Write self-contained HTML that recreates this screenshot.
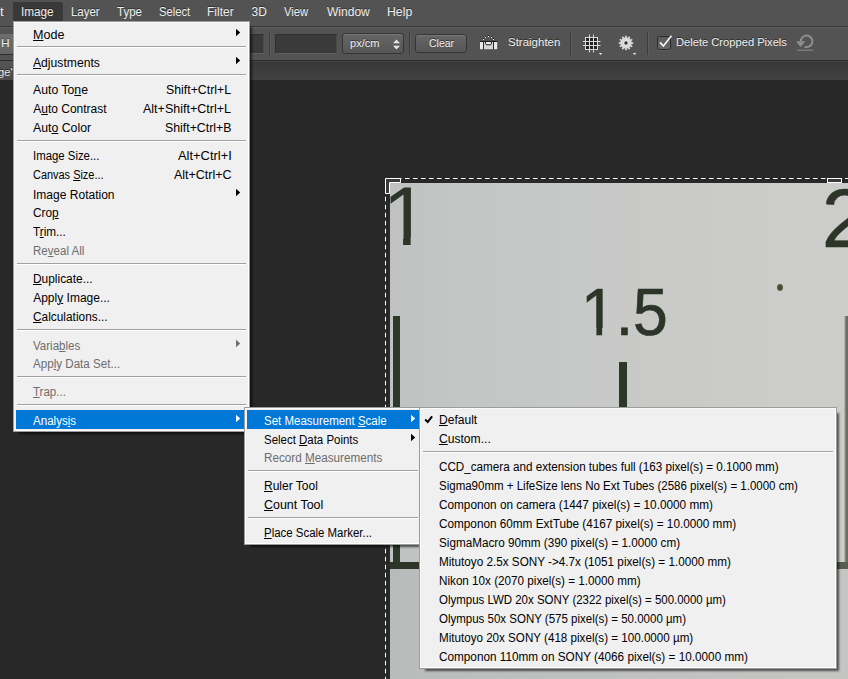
<!DOCTYPE html>
<html lang="en"><head><meta charset="utf-8"><title>Photoshop - Image &gt; Analysis &gt; Set Measurement Scale</title>
<style>
html,body{margin:0;padding:0}
body{width:848px;height:679px;overflow:hidden;position:relative;background:#282828;font:12px/19px "Liberation Sans",sans-serif;color:#000;cursor:default}
div,span{box-sizing:border-box}
.a{position:absolute}
.t{position:absolute;top:0;white-space:nowrap;transform-origin:0 50%;height:19px;line-height:19px}
u{text-decoration:underline;text-underline-offset:1px;text-decoration-thickness:1px}
/* ---------- app chrome ---------- */
#menubar{left:0;top:0;width:848px;height:26px;background:#535353;color:#f0f0f0}
#menubar .t{top:3px;line-height:19px;text-shadow:0 -1px 0 rgba(0,0,0,.45)}
#menubar .sel{left:13px;top:2px;width:50px;height:19px;background:#393939;border-radius:2px 2px 0 0}
#optbar{left:0;top:26px;width:848px;height:35px;background:#535353;border-top:1px solid #383838;border-bottom:1px solid #2b2b2b;box-shadow:inset 0 1px 0 #5f5f5f;color:#f0f0f0}
#optbar .t{top:6px;font-size:11px;text-shadow:0 -1px 0 rgba(0,0,0,.5)}
.field{top:7px;height:20px;background:#3a3a3a;border:1px solid #303030;border-bottom-color:#5e5e5e;border-right-color:#4a4a4a}
.vsep{top:5px;width:1px;height:23px;background:#3d3d3d;box-shadow:1px 0 0 #5c5c5c}
.btn{top:7px;height:20px;border:1px solid #353535;border-radius:3px;background:linear-gradient(#666,#565656);box-shadow:inset 0 1px 0 #777}
#tabbar{left:0;top:61px;width:848px;height:19px;background:linear-gradient(#383838,#424242);box-shadow:inset 0 1px 0 #444}
#tabbar .tab{left:0;top:0;width:13px;height:19px;background:linear-gradient(#555,#4c4c4c);color:#e8e8e8}
/* ---------- canvas ---------- */
#photo{left:390px;top:183px;width:458px;height:496px;overflow:hidden;
 background:
  linear-gradient(180deg,rgba(0,0,0,0) 386px,rgba(20,30,40,.045) 386px),
  linear-gradient(90deg,#bfc2c1 0,#c3c6c5 15%,#c6c8c7 35%,#c9cac8 60%,#ccccca 85%,#ccccca 100%);
 font-family:"Liberation Sans",sans-serif;color:#2c3528}
#photo .ink{background:#2d3829}
#photo .num{position:absolute;white-space:nowrap;line-height:1}
#photo .one{display:inline-block;clip-path:polygon(0 0,100% 0,100% .74em,.338em .74em,.338em 100%,.247em 100%,.247em .74em,0 .74em)}
/* ---------- popup menus ---------- */
.menu{background:#f0f0f0;border:1px solid #9c9c9c;box-shadow:inset 1px 1px 0 #fafafa,inset -1px -1px 0 #fff,4px 4px 2px -2px rgba(0,0,0,.6);padding:2px}
.mi{position:relative;height:19px}
.mi .t{top:1px}
.mi.sub .t{top:2px}
.mi.hi{background:#0078d7;color:#fff}
.mi.dis{color:#6d6d6d}
.sep{position:relative;height:9px}
.sep:before{content:"";position:absolute;left:1px;right:1px;top:3px;height:1px;background:#a0a0a0;box-shadow:0 1px 0 #fff}
.arr{position:absolute;top:4px;width:5px;height:9px;fill:currentColor}
</style></head><body>
<div class="a" id="menubar"><div class="a sel"></div><span class="t" id="t1" style="left:-19.00px;transform:scaleX(1.0952);">Edit</span><span class="t" id="t2" style="left:20.60px;transform:scaleX(0.9784);">Image</span><span class="t" id="t3" style="left:70.78px;transform:scaleX(0.9513);">Layer</span><span class="t" id="t4" style="left:116.64px;transform:scaleX(0.9591);">Type</span><span class="t" id="t5" style="left:159.07px;transform:scaleX(0.9335);">Select</span><span class="t" id="t6" style="left:207.04px;transform:scaleX(0.9989);">Filter</span><span class="t" id="t7" style="left:251.50px;transform:scaleX(1.0000);">3D</span><span class="t" id="t8" style="left:283.68px;transform:scaleX(0.9350);">View</span><span class="t" id="t9" style="left:326.96px;transform:scaleX(1.0032);">Window</span><span class="t" id="t10" style="left:387.11px;transform:scaleX(1.0206);">Help</span></div>
<div class="a" id="optbar"><div class="a" style="left:0;top:7px;width:13px;height:21px;background:linear-gradient(#6f6f6f,#646464);border-bottom:1px solid #2e2e2e"></div><span class="t" id="t11" style="left:0.97px;transform:scaleX(1.0877);top:7px">H</span><div class="a field" style="left:200px;width:64px"></div><div class="a vsep" style="left:269px"></div><div class="a field" style="left:275px;width:62px"></div><div class="a btn" style="left:342px;width:62px;top:6px;height:21px"></div><span class="t" id="t12" style="left:350.14px;transform:scaleX(1.0080);top:7px">px/cm</span><svg class="a" style="left:392px;top:12px" width="9" height="11" viewBox="0 0 9 11"><path d="M1 4.2 4.5 .5 8 4.2zM1 6.8 4.5 10.5 8 6.8z" fill="#e6e6e6"/></svg><div class="a vsep" style="left:409px"></div><div class="a btn" style="left:415px;width:52px;height:19px"></div><span class="t" id="t13" style="left:428.62px;transform:scaleX(0.9532);top:7px">Clear</span><svg class="a" style="left:478px;top:6px" width="22" height="18" viewBox="0 0 22 18"><rect x="1.800" y="8" width="17.400" height="1" fill="#1c1c1c"/><rect x="2" y="9" width="3" height="7.200" fill="#e8e8e8"/><rect x="6" y="9" width="9" height="7.200" fill="#d6d6d4"/><rect x="16" y="9" width="3.200" height="7.200" fill="#e8e8e8"/><rect x="5" y="9" width="1" height="7.200" fill="#2c2c2c"/><rect x="15" y="9" width="1" height="7.200" fill="#2c2c2c"/><path d="M7.500 9v1.300a1.500 1.500 0 0 0 1.500 1.500h3a1.500 1.500 0 0 0 1.500-1.500V9" fill="#ececec" stroke="#222" stroke-width="1"/><g fill="#1c1c1c"><rect x="5" y="5" width="1" height="1"/><rect x="7" y="3" width="1" height="1"/><rect x="10" y="2" width="1" height="1"/><rect x="13" y="3" width="1" height="1"/><rect x="15" y="5" width="1" height="1"/></g><g fill="#f4f4f4"><rect x="5" y="6" width="1" height="1"/><rect x="7" y="4" width="1" height="1"/><rect x="10" y="3" width="1" height="1"/><rect x="13" y="4" width="1" height="1"/><rect x="15" y="6" width="1" height="1"/></g></svg><span class="t" id="t14" style="left:507.76px;transform:scaleX(1.0437);">Straighten</span><div class="a vsep" style="left:570px"></div><svg class="a" style="left:582px;top:6px" width="22" height="23" viewBox="0 0 22 23"><rect x="3" y="4" width="13" height="13" fill="#242424"/><path d="M3.500 4v13M15.500 4v13M3 4.500h13M3 16.500h13" stroke="#dadada" stroke-width="1" fill="none"/><path d="M7.500 1.500v18M11.500 1.500v18M1 8.500h17.500M1 12.500h17.500" stroke="#dadada" stroke-width="1" fill="none"/><path d="M16.800 20h3.600l-1.800 2.100z" fill="#e6e6e6"/></svg><svg class="a" style="left:617px;top:6px" width="22" height="23" viewBox="0 0 22 23"><path d="M16.25 9.16L16.25 10.84L14.53 10.88L14.23 12.01L15.70 12.90L14.86 14.35L13.35 13.52L12.52 14.35L13.35 15.86L11.90 16.70L11.01 15.23L9.88 15.53L9.84 17.25L8.16 17.25L8.12 15.53L6.99 15.23L6.10 16.70L4.65 15.86L5.48 14.35L4.65 13.52L3.14 14.35L2.30 12.90L3.77 12.01L3.47 10.88L1.75 10.84L1.75 9.16L3.47 9.12L3.77 7.99L2.30 7.10L3.14 5.65L4.65 6.48L5.48 5.65L4.65 4.14L6.10 3.30L6.99 4.77L8.12 4.47L8.16 2.75L9.84 2.75L9.88 4.47L11.01 4.77L11.90 3.30L13.35 4.14L12.52 5.65L13.35 6.48L14.86 5.65L15.70 7.10L14.23 7.99L14.53 9.12Z" fill="#d9d9d7"/><circle cx="9" cy="10" r="2.600" fill="#e9e9e9"/><circle cx="9" cy="10" r="1.700" fill="#2e2e2e"/><path d="M15.800 20h3.600l-1.800 2.100z" fill="#e6e6e6"/></svg><div class="a vsep" style="left:647px"></div><div class="a" style="left:657px;top:9px;width:14px;height:14px;border:1px solid #2a2a2a;border-radius:2.500px;background:linear-gradient(#5c5c5c,#676767);box-shadow:0 1px 0 #606060"></div><svg class="a" style="left:657px;top:6px" width="17" height="16" viewBox="0 0 17 16"><path d="M3 9.300 6.400 13 14.500 2.700" fill="none" stroke="#f4f4f4" stroke-width="1.700"/></svg><span class="t" id="t15" style="left:676.09px;transform:scaleX(1.0135);">Delete Cropped Pixels</span><svg class="a" style="left:795px;top:6px" width="20" height="20" viewBox="0 0 20 20"><path d="M5.800 8.300A5.800 5.800 0 1 1 9.600 13.800" fill="none" stroke="#8e8e8e" stroke-width="2"/><path d="M1 8.300h9.300L5.600 14z" fill="#8e8e8e"/><rect x="1.800" y="16.700" width="16.300" height="1" fill="#8e8e8e"/></svg></div>
<div class="a" id="tabbar"><div class="a tab"><span class="t" id="t16" style="left:-2.00px;transform:scaleX(1.0143);top:2px;line-height:19px;font-size:11px;text-shadow:0 -1px 0 rgba(0,0,0,.5)">ge'</span></div></div>
<svg class="a" style="left:380px;top:172px" width="468" height="507" viewBox="0 0 468 507"><path d="M5.500 6.500V507" fill="none" stroke="#fff" stroke-width="1" stroke-dasharray="4.500 3.500" stroke-dashoffset="5.700"/><path d="M5.500 6.500H468" fill="none" stroke="#fff" stroke-width="1" stroke-dasharray="4.500 3.500" stroke-dashoffset="4.500"/><path d="M5.500 6.500h15v4h-11v11h-4z" fill="#3a3a3a" stroke="#fff" stroke-width="1"/><rect x="447.500" y="6.500" width="14" height="4" fill="#3a3a3a" stroke="#fff" stroke-width="1"/></svg>
<div class="a" id="photo"><span class="num" style="left:-7.600px;top:-7.600px;font-size:83.600px"><span class="one">1</span></span><span class="num" style="left:431.800px;top:-6.200px;font-size:83.600px;-webkit-text-stroke:.500px #2c3528">2</span><span class="num" style="left:190.800px;top:95px;font-size:67.400px;transform:scaleX(.927);transform-origin:0 0;-webkit-text-stroke:.700px #2c3528"><span class="one">1</span>.5</span><div class="a ink" style="left:2.800px;top:133px;width:7.400px;height:247px"></div><div class="a ink" style="left:229px;top:179px;width:7.500px;height:80px"></div><div class="a" style="left:453.500px;top:133px;width:5px;height:247px;background:linear-gradient(90deg,rgba(100,106,96,0),#6a6f66 40%)"></div><div class="a" style="left:0;top:379.200px;width:458px;height:6.600px;background:linear-gradient(90deg,#2c3528 0,#2c3528 80%,#596052 100%)"></div><div class="a" style="left:386.500px;top:100.500px;width:6.500px;height:7.500px;border-radius:50%;background:radial-gradient(#4a4830 30%,#77724e)"></div></div>
<div class="a menu" id="m-image" style="left:13px;top:21px;width:237px"><div class="mi sub"><span class="t" id="t17" style="left:16.75px;transform:scaleX(1.0461);"><u>M</u>ode</span><svg class="arr" style="left:220.2px" viewBox="0 0 5 9"><path d="M0 .800 4.200 4.500 0 8.200z"/></svg></div><div class="sep"></div><div class="mi sub"><span class="t" id="t18" style="left:17.25px;transform:scaleX(1.0122);"><u>A</u>djustments</span><svg class="arr" style="left:220.2px" viewBox="0 0 5 9"><path d="M0 .800 4.200 4.500 0 8.200z"/></svg></div><div class="sep"></div><div class="mi"><span class="t" id="t19" style="left:17.31px;transform:scaleX(1.0216);">Auto To<u>n</u>e</span><span class="t" id="t20" style="left:150.29px;transform:scaleX(1.0266);">Shift+Ctrl+L</span></div><div class="mi"><span class="t" id="t21" style="left:17.20px;transform:scaleX(1.0000);">A<u>u</u>to Contrast</span><span class="t" id="t22" style="left:127.03px;transform:scaleX(1.0424);">Alt+Shift+Ctrl+L</span></div><div class="mi"><span class="t" id="t23" style="left:17.31px;transform:scaleX(1.0241);">Aut<u>o</u> Color</span><span class="t" id="t24" style="left:148.70px;transform:scaleX(1.0261);">Shift+Ctrl+B</span></div><div class="sep"></div><div class="mi"><span class="t" id="t25" style="left:16.83px;transform:scaleX(0.9478);">Ima<u>g</u>e Size...</span><span class="t" id="t26" style="left:162.24px;transform:scaleX(1.0753);">Alt+Ctrl+I</span></div><div class="mi"><span class="t" id="t27" style="left:17.34px;transform:scaleX(0.9113);">Canvas <u>S</u>ize...</span><span class="t" id="t28" style="left:157.56px;transform:scaleX(1.0399);">Alt+Ctrl+C</span></div><div class="mi sub"><span class="t" id="t29" style="left:16.68px;transform:scaleX(1.0018);">Ima<u>g</u>e Rotation</span><svg class="arr" style="left:220.2px" viewBox="0 0 5 9"><path d="M0 .800 4.200 4.500 0 8.200z"/></svg></div><div class="mi"><span class="t" id="t30" style="left:17.06px;transform:scaleX(0.9877);">Cro<u>p</u></span></div><div class="mi"><span class="t" id="t31" style="left:17.36px;transform:scaleX(0.9797);">T<u>r</u>im...</span></div><div class="mi dis"><span class="t" id="t32" style="left:16.67px;transform:scaleX(0.9621);">Re<u>v</u>eal All</span></div><div class="sep"></div><div class="mi"><span class="t" id="t33" style="left:16.80px;transform:scaleX(0.9929);"><u>D</u>uplicate...</span></div><div class="mi"><span class="t" id="t34" style="left:17.20px;transform:scaleX(1.0000);">Appl<u>y</u> Image...</span></div><div class="mi"><span class="t" id="t35" style="left:17.34px;transform:scaleX(0.9896);"><u>C</u>alculations...</span></div><div class="sep"></div><div class="mi dis sub"><span class="t" id="t36" style="left:17.39px;transform:scaleX(0.9610);">Varia<u>b</u>les</span><svg class="arr" style="left:220.2px" viewBox="0 0 5 9"><path d="M0 .800 4.200 4.500 0 8.200z"/></svg></div><div class="mi dis"><span class="t" id="t37" style="left:17.39px;transform:scaleX(0.9672);">App<u>l</u>y Data Set...</span></div><div class="sep"></div><div class="mi dis"><span class="t" id="t38" style="left:17.36px;transform:scaleX(0.9609);"><u>T</u>rap...</span></div><div class="sep"></div><div class="mi hi sub"><span class="t" id="t39" style="left:17.39px;transform:scaleX(0.9647);">Analys<u>i</u>s</span><svg class="arr" style="left:220.2px" viewBox="0 0 5 9"><path d="M0 .800 4.200 4.500 0 8.200z"/></svg></div></div>
<div class="a menu" id="m-analysis" style="left:244px;top:407px;width:178px"><div class="mi hi sub"><span class="t" id="t40" style="left:16.67px;transform:scaleX(0.9576);">Set Measurement <u>S</u>cale</span><svg class="arr" style="left:164.0px" viewBox="0 0 5 9"><path d="M0 .800 4.200 4.500 0 8.200z"/></svg></div><div class="mi sub"><span class="t" id="t41" style="left:16.69px;transform:scaleX(0.9547);">Select <u>D</u>ata Points</span><svg class="arr" style="left:164.0px" viewBox="0 0 5 9"><path d="M0 .800 4.200 4.500 0 8.200z"/></svg></div><div class="mi dis"><span class="t" id="t42" style="left:16.82px;transform:scaleX(0.9753);">Record <u>M</u>easurements</span></div><div class="sep"></div><div class="mi"><span class="t" id="t43" style="left:16.79px;transform:scaleX(1.0014);"><u>R</u>uler Tool</span></div><div class="mi"><span class="t" id="t44" style="left:17.06px;transform:scaleX(1.0361);"><u>C</u>ount Tool</span></div><div class="sep"></div><div class="mi"><span class="t" id="t45" style="left:16.52px;transform:scaleX(0.9528);"><u>P</u>lace Scale Marker...</span></div></div>
<div class="a menu" id="m-scale" style="left:419px;top:407px;width:418px"><div class="mi"><svg class="a" style="left:2px;top:5px" width="10" height="9" viewBox="0 0 10 9"><path d="M1.200 4.500 3.700 7 8.100 1.300" fill="none" stroke="#000" stroke-width="2"/></svg><span class="t" id="t46" style="left:16.78px;transform:scaleX(1.0046);"><u>D</u>efault</span></div><div class="mi"><span class="t" id="t47" style="left:17.12px;transform:scaleX(1.0075);"><u>C</u>ustom...</span></div><div class="sep"></div><div class="mi"><span class="t" id="t48" style="left:17.43px;transform:scaleX(0.9727);">CCD_camera and extension tubes full (163 pixel(s) = 0.1000 mm)</span></div><div class="mi"><span class="t" id="t49" style="left:17.23px;transform:scaleX(0.9591);">Sigma90mm + LifeSize lens No Ext Tubes (2586 pixel(s) = 1.0000 cm)</span></div><div class="mi"><span class="t" id="t50" style="left:17.43px;transform:scaleX(0.9814);">Componon on camera (1447 pixel(s) = 10.0000 mm)</span></div><div class="mi"><span class="t" id="t51" style="left:17.43px;transform:scaleX(0.9793);">Componon 60mm ExtTube (4167 pixel(s) = 10.0000 mm)</span></div><div class="mi"><span class="t" id="t52" style="left:17.17px;transform:scaleX(0.9758);">SigmaMacro 90mm (390 pixel(s) = 1.0000 cm)</span></div><div class="mi"><span class="t" id="t53" style="left:16.96px;transform:scaleX(0.9754);">Mitutoyo 2.5x SONY -&gt;4.7x (1051 pixel(s) = 1.0000 mm)</span></div><div class="mi"><span class="t" id="t54" style="left:16.64px;transform:scaleX(0.9737);">Nikon 10x (2070 pixel(s) = 1.0000 mm)</span></div><div class="mi"><span class="t" id="t55" style="left:17.48px;transform:scaleX(0.9555);">Olympus LWD 20x SONY (2322 pixel(s) = 500.0000 µm)</span></div><div class="mi"><span class="t" id="t56" style="left:17.48px;transform:scaleX(0.9581);">Olympus 50x SONY (575 pixel(s) = 50.0000 µm)</span></div><div class="mi"><span class="t" id="t57" style="left:17.13px;transform:scaleX(0.9685);">Mitutoyo 20x SONY (418 pixel(s) = 100.0000 µm)</span></div><div class="mi"><span class="t" id="t58" style="left:17.43px;transform:scaleX(0.9796);">Componon 110mm on SONY (4066 pixel(s) = 10.0000 mm)</span></div></div>
</body></html>
